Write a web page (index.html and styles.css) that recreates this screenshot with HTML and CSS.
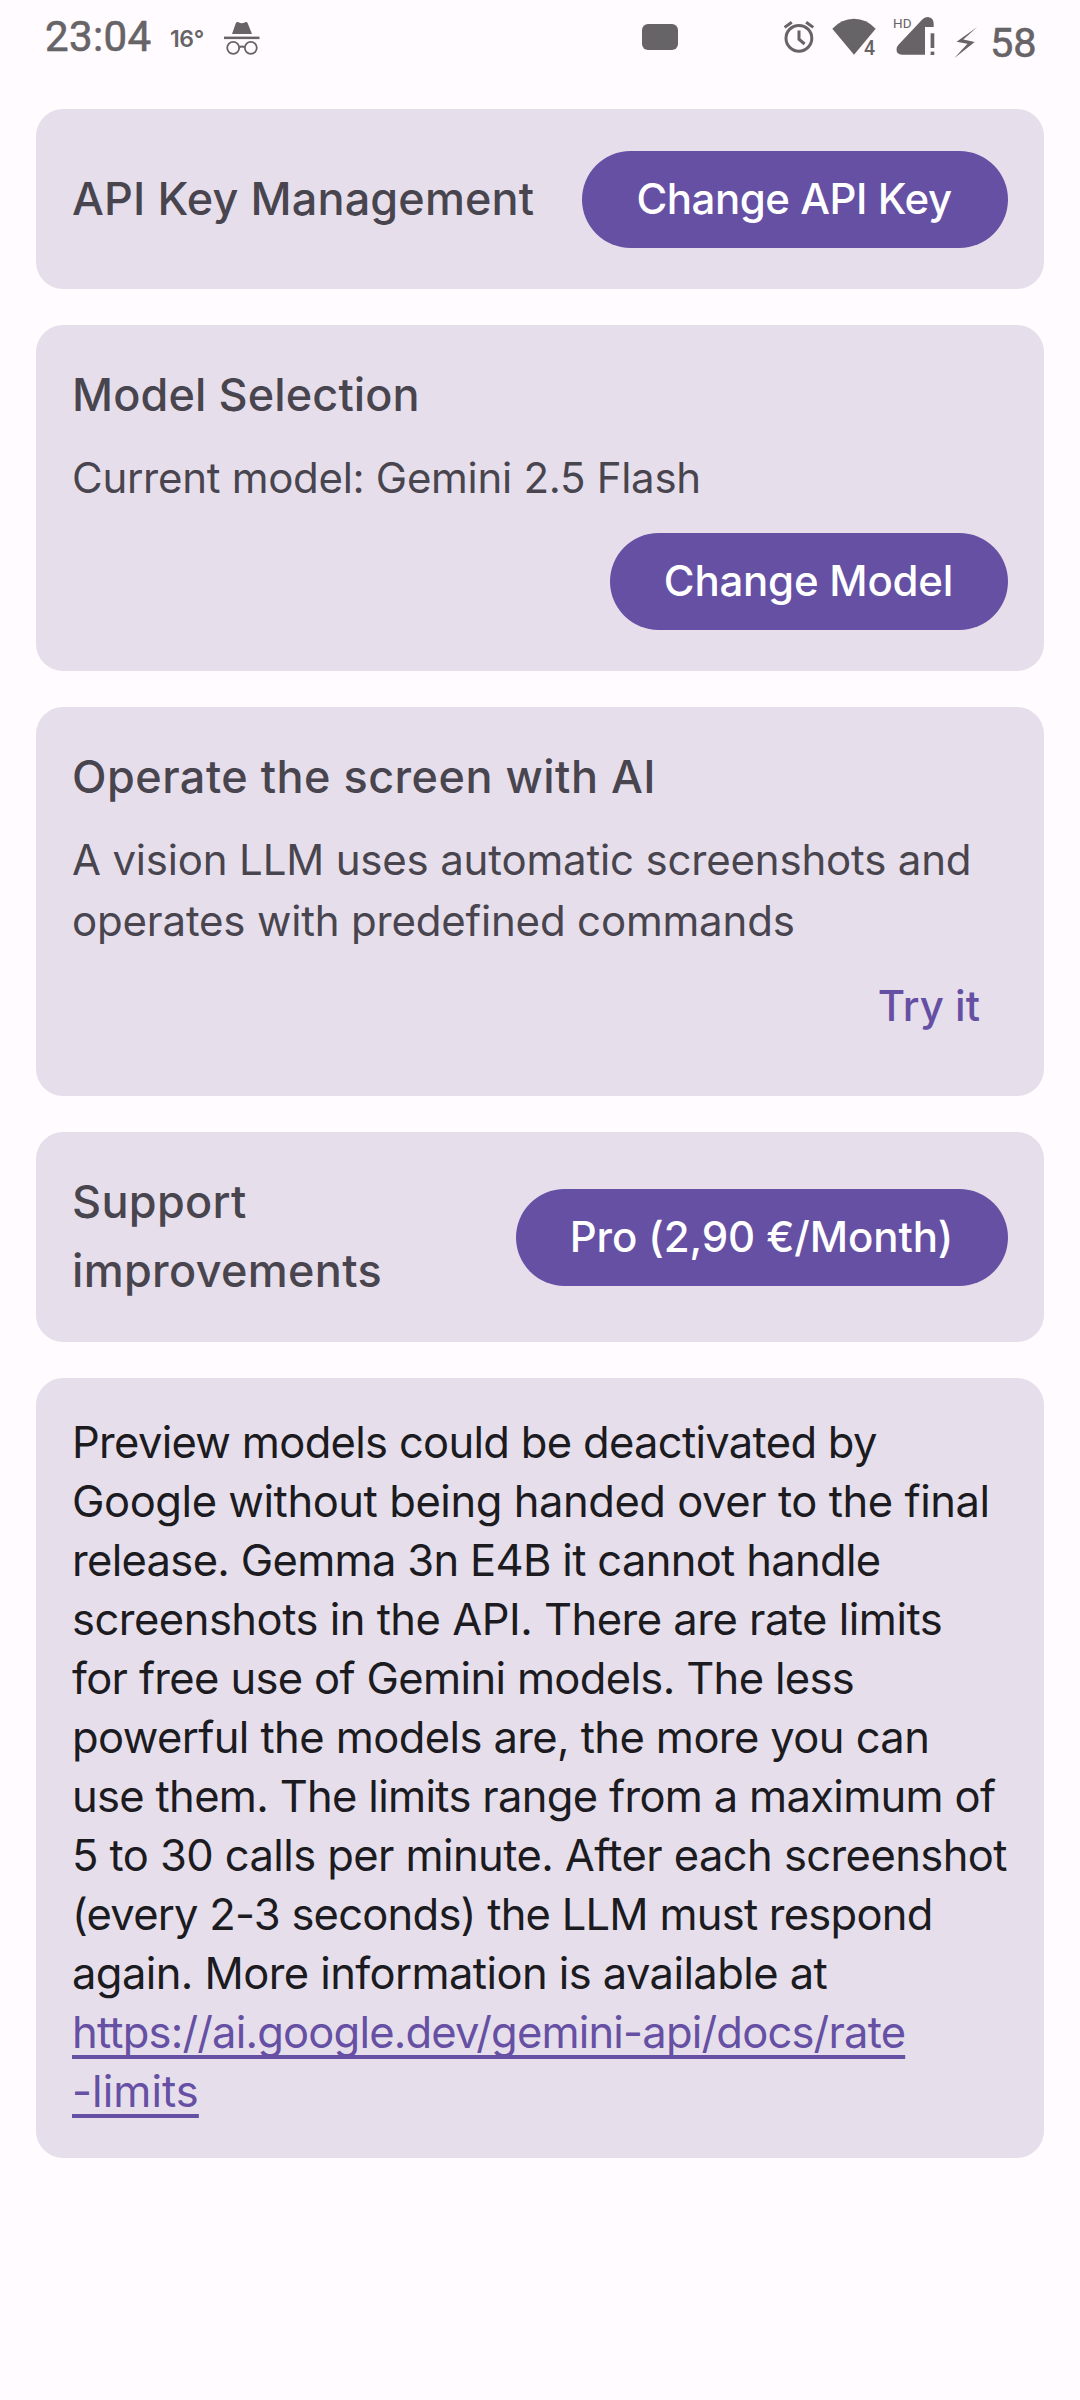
FILE: index.html
```html
<!DOCTYPE html>
<html lang="en">
<head>
<meta charset="utf-8">
<title>Menu</title>
<link rel="stylesheet" href="styles.css">
</head>
<body>
<header class="status">
  <span class="clock">23:04</span>
  <span class="temp">16°</span>
  <svg class="incognito" width="38" height="73" viewBox="223 0 38 73">
    <path d="M232 34 L235.700 23.500 Q236.500 21.500 238.500 22.300 Q241.800 24 245 22.300 Q247 21.500 247.800 23.500 L252 34 Z"/>
    <rect x="224" y="36.600" width="35.500" height="2.500"/>
    <g fill="none" stroke="currentColor" stroke-width="1.800">
      <circle cx="233.200" cy="47.800" r="6"/><circle cx="250.800" cy="47.800" r="6"/>
      <path d="M239 47.500 Q242 45.500 245 47.500"/>
    </g>
  </svg>
  <svg class="pill" width="36" height="73" viewBox="642 0 36 73"><rect x="642" y="24" width="36" height="26" rx="6"/></svg>
  <svg class="alarm" width="34" height="73" viewBox="782 0 34 73">
    <g fill="none" stroke="currentColor" stroke-width="3">
      <circle cx="798.900" cy="38.300" r="12.900"/>
      <path d="M799 30.500 V39.200 L804.600 44"/>
      <path d="M784.600 27.400 L791.800 22.200 M813.300 27.400 L806.100 22.200"/>
    </g>
  </svg>
  <svg class="wifi" width="46" height="73" viewBox="832 0 46 73">
    <path d="M832.300 28.700 Q841.500 18.700 854 18.700 Q866.500 18.700 875.700 28.700 L854 54.800 Z"/>
    <text class="gen" x="864" y="54.600">4</text>
  </svg>
  <svg class="signal" width="42" height="73" viewBox="893 0 42 73">
    <text class="hd" x="893" y="27.500">HD</text>
    <path d="M925 54.800 H902 Q896.500 54.500 896.500 49.500 Q896.500 46.800 898.500 44.800 L922.500 19.300 Q925 17 928 17 Q933.700 17.500 933.700 24 V27 H925 Z"/>
    <rect x="930.600" y="33.300" width="3.700" height="14.700"/><rect x="930.600" y="51.600" width="3.700" height="3.400"/>
  </svg>
  <svg class="bolt" width="24" height="73" viewBox="954 0 24 73">
    <path d="M977.200 27 L956.600 41.700 L967.500 43.800 L954.200 58.200 L974.700 42 L963.300 39.500 Z"/>
  </svg>
  <span class="battery">58</span>
</header>
<main class="cards">
  <section class="card row">
    <h2 class="title t-key">API Key Management</h2>
    <button class="btn b-key">Change API Key</button>
  </section>
  <section class="card">
    <h2 class="title t-model">Model Selection</h2>
    <p class="sub">Current model: Gemini 2.5 Flash</p>
    <div class="actions"><button class="btn b-model">Change Model</button></div>
  </section>
  <section class="card">
    <h2 class="title t-operate">Operate the screen with AI</h2>
    <p class="sub sub-vision">A vision LLM uses automatic screenshots and<br>operates with predefined commands</p>
    <div class="text-actions"><button class="text-btn">Try it</button></div>
  </section>
  <section class="card row">
    <h2 class="title t-support">Support<br>improvements</h2>
    <button class="btn b-pro">Pro (2,90 €/Month)</button>
  </section>
  <section class="card">
    <p class="note">
      <span class="l1">Preview models could be deactivated by</span>
      <span class="l2">Google without being handed over to the final</span>
      <span class="l3">release. Gemma 3n E4B it cannot handle</span>
      <span class="l4">screenshots in the API. There are rate limits</span>
      <span class="l5">for free use of Gemini models. The less</span>
      <span class="l6">powerful the models are, the more you can</span>
      <span class="l7">use them. The limits range from a maximum of</span>
      <span class="l8">5 to 30 calls per minute. After each screenshot</span>
      <span class="l9">(every 2-3 seconds) the LLM must respond</span>
      <span class="l10">again. More information is available at</span>
      <span class="l11"><a>https://ai.google.dev/gemini-api/docs/rate</a></span>
      <span class="l12"><a>-limits</a></span>
    </p>
  </section>
</main>
</body>
</html>
```
FILE: styles.css
```css
* { box-sizing: border-box; margin: 0; padding: 0; }
body {
  width: 1080px;
  min-height: 2400px;
  background: #fffbfe;
  color: #1c1b1f;
  font-family: Inter, "Liberation Sans", sans-serif;
}

/* status bar */
.status { display: flex; height: 73px; padding-left: 45px; color: #666467; line-height: 73px; }
.status svg { flex: none; fill: currentColor; }
.clock { width: 125px; font: 400 42px/73px Roboto, sans-serif; letter-spacing: 0.4px; -webkit-text-stroke: 0.6px; }
.temp { width: 53px; padding-top: 3px; font-size: 23px; font-weight: 600; letter-spacing: -0.4px; }
.pill { margin-left: 381px; }
.alarm { margin-left: 104px; }
.wifi { margin-left: 16px; }
.signal { margin-left: 15px; }
.bolt { margin-left: 19px; }
.gen { font: 500 19.500px Roboto, sans-serif; paint-order: stroke; stroke: #fffbfe; stroke-width: 3px; }
.hd { font: 400 13.500px Roboto, sans-serif; }
.battery { margin-left: 12px; font: 400 41.500px/86px Roboto, sans-serif; -webkit-text-stroke: 0.6px; }

/* cards */
.cards { display: flex; flex-direction: column; gap: 36px; padding: 36px; }
.card { padding: 36px; border-radius: 27px; background: #e6dfeb; }
.row { display: flex; align-items: center; justify-content: space-between; }
.title { color: #49454f; font-size: 45px; font-weight: 500; line-height: 69px; margin: -1px 0 1px; white-space: nowrap; }
.t-key { letter-spacing: 0.12px; }
.t-model { letter-spacing: 0.12px; }
.t-operate { letter-spacing: 0.48px; }
.t-support { letter-spacing: 0.33px; }
.sub { margin-top: 18px; color: #49454f; font-size: 42px; line-height: 61px; letter-spacing: -0.29px; white-space: nowrap; }
.sub-vision { letter-spacing: -0.18px; }

/* buttons */
.btn {
  height: 97px;
  margin: 6px 0 5px;
  padding-bottom: 2px;
  border: 0;
  border-radius: 49px;
  background: #6650a4;
  color: #fff;
  font: 500 42px/95px Inter, "Liberation Sans", sans-serif;
  white-space: nowrap;
}
.b-key { width: 426px; padding-right: 2px; letter-spacing: -0.46px; }
.b-model { width: 398px; padding-right: 1px; letter-spacing: -0.22px; }
.b-pro { width: 492px; padding-right: 1px; letter-spacing: -0.1px; }
.actions { display: flex; justify-content: flex-end; padding-top: 19px; }
.text-actions { display: flex; justify-content: flex-end; }
.text-btn { height: 109px; padding: 0 28px; border: 0; background: none; color: #6650a4; font: 500 42px/109px Inter, "Liberation Sans", sans-serif; }

/* note */
.note { margin: -1px 0 1px; font-size: 43.500px; line-height: 59px; white-space: nowrap; }
.note span { display: block; }
.note a { color: #6650a4; text-decoration: underline; text-decoration-thickness: 3.500px; text-underline-offset: 7px; text-decoration-skip-ink: none; }
.l1 { letter-spacing: -0.69px; }
.l2 { letter-spacing: -0.44px; }
.l3 { letter-spacing: -0.68px; }
.l4 { letter-spacing: -0.5px; }
.l5 { letter-spacing: -0.65px; }
.l6 { letter-spacing: -0.59px; }
.l7 { letter-spacing: -0.68px; }
.l8 { letter-spacing: -0.58px; }
.l9 { letter-spacing: -0.76px; }
.l10 { letter-spacing: -0.58px; }
.l11 { letter-spacing: -0.81px; }
.l12 { letter-spacing: 0.05px; }
```
